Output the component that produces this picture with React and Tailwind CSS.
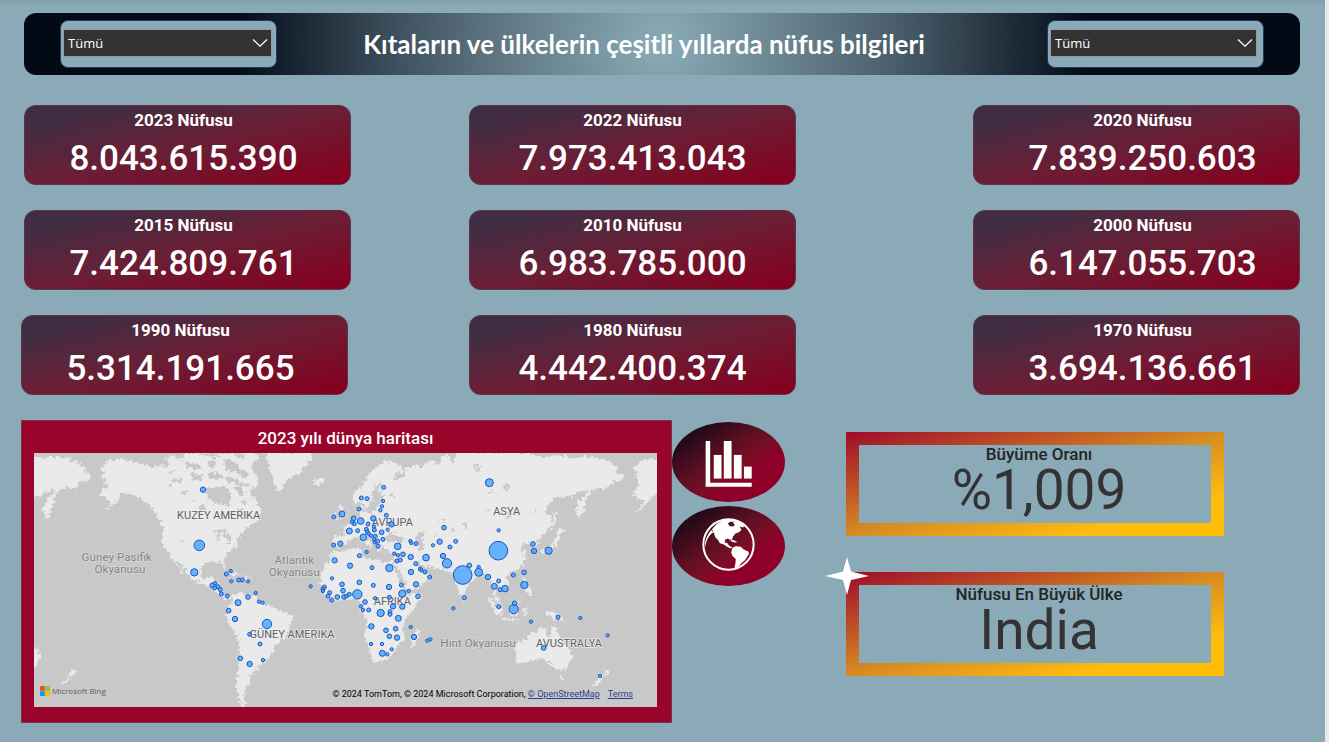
import React from "react";

const topRows = [
  [
    { year: "2023", value: "8.043.615.390" },
    { year: "2022", value: "7.973.413.043" },
    { year: "2020", value: "7.839.250.603" },
  ],
  [
    { year: "2015", value: "7.424.809.761" },
    { year: "2010", value: "6.983.785.000" },
    { year: "2000", value: "6.147.055.703" },
  ],
];

const lastRow = [
  { year: "1990", value: "5.314.191.665" },
  { year: "1980", value: "4.442.400.374" },
  { year: "1970", value: "3.694.136.661" },
];

const columnStyles = ["col-start-1 pr-2", "col-start-3", "col-start-5 pl-3"];

// Each entry is [x, y, radius] in map units.
const bubbles = [
  [549, 224, 8], [538, 391, 16], [523, 472, 11], [619, 477, 6], [632, 468, 5], [634, 499, 5],
  [577, 511, 7], [585, 505, 5], [584, 519, 6], [594, 515, 6], [601, 524, 6], [604, 537, 6],
  [622, 543, 6], [656, 495, 6], [667, 495, 6], [684, 499, 5], [654, 563, 9], [626, 587, 7],
  [645, 612, 8], [684, 546, 7], [707, 534, 5], [717, 560, 5], [728, 563, 5], [741, 627, 14],
  [689, 658, 6], [720, 687, 6], [661, 730, 7], [689, 747, 8], [729, 735, 5],
  [1091, 217, 6], [1024, 249, 6], [1041, 251, 6], [1089, 258, 5], [1086, 274, 5], [1081, 286, 5],
  [1017, 282, 6], [1099, 301, 6], [941, 305, 6], [966, 297, 9], [1001, 310, 7], [997, 321, 6],
  [1003, 326, 6], [1022, 318, 10], [1060, 310, 8], [1044, 327, 6], [1062, 335, 5], [1063, 345, 6],
  [1114, 328, 8], [988, 348, 9], [1013, 347, 6], [1039, 343, 6], [1042, 351, 6], [1046, 356, 5],
  [1085, 352, 7], [1103, 344, 5], [1030, 367, 10], [1053, 362, 5], [1066, 364, 6], [1062, 373, 5],
  [1065, 382, 5], [1073, 379, 6], [1089, 373, 6], [1074, 394, 6], [941, 390, 6], [961, 386, 8],
  [1133, 394, 10], [1171, 378, 5], [1174, 384, 5], [1188, 386, 6], [1239, 391, 5], [1259, 380, 8],
  [1018, 422, 6], [1040, 411, 5], [944, 436, 8], [990, 452, 8], [1056, 458, 6], [1108, 459, 11],
  [1123, 416, 5], [1134, 421, 5], [1149, 418, 7], [1131, 438, 6], [1141, 435, 6], [1172, 426, 8],
  [1187, 446, 6], [1218, 428, 10], [1201, 462, 6], [1204, 466, 5], [1215, 471, 6], [1229, 486, 6],
  [1173, 471, 8], [1188, 508, 8], [1166, 528, 5], [1194, 544, 7], [936, 490, 5], [872, 514, 5],
  [966, 508, 7], [913, 516, 6], [909, 522, 6], [909, 528, 5], [929, 533, 6], [924, 543, 6],
  [935, 555, 6], [952, 546, 7], [969, 527, 7], [972, 546, 7], [980, 543, 6], [988, 538, 6],
  [1012, 538, 14], [1018, 502, 7], [1060, 511, 6], [1107, 516, 8], [1144, 510, 6], [1147, 536, 11],
  [1035, 561, 7], [1065, 550, 5], [1108, 547, 6], [1023, 574, 5], [1029, 585, 5], [1046, 585, 6],
  [1082, 594, 11], [1110, 590, 6], [1110, 598, 6], [1119, 574, 8], [1147, 575, 8], [1135, 610, 9],
  [1054, 634, 8], [1098, 646, 7], [1127, 641, 7], [1172, 636, 5], [1108, 664, 7], [1131, 668, 8],
  [1182, 666, 8], [1222, 677, 5], [1231, 673, 5], [1053, 687, 5], [1086, 687, 5], [1115, 703, 5],
  [1087, 715, 9], [1102, 718, 5],
  [1408, 203, 12], [1436, 346, 5], [1272, 338, 7], [1290, 396, 6], [1307, 379, 6], [1269, 423, 8],
  [1281, 445, 14], [1435, 407, 28], [1328, 480, 28], [1348, 451, 7], [1376, 456, 5], [1376, 472, 12],
  [1404, 486, 8], [1436, 498, 6], [1423, 514, 9], [1440, 524, 6], [1455, 521, 10], [1480, 480, 6],
  [1512, 472, 7], [1513, 510, 11], [1539, 387, 7], [1542, 408, 8], [1586, 407, 11], [1333, 548, 6],
  [1300, 580, 5], [1436, 575, 6], [1481, 582, 14], [1484, 565, 7], [1533, 620, 5], [1614, 607, 6],
  [1681, 609, 5], [1763, 661, 5], [1571, 699, 7], [1740, 783, 5],
];

const landPaths = [
  // North and Central America
  "M240 160L265 140L292 130L330 138L375 150L398 158L420 148L440 160L450 140L430 126L460 124L480 134L500 114L716 114L712 140L690 150L700 170L715 185L712 215L690 225L700 250L716 272L722 290L712 320L690 330L672 345L655 372L650 390L640 402L622 418L612 432L614 450L618 464L610 460L604 440L585 440L562 440L548 448L543 466L546 488L560 494L574 484L582 486L578 502L590 506L598 514L600 532L612 540L628 538L636 546L630 552L616 550L602 546L592 530L578 520L560 510L540 504L516 494L504 480L494 462L478 442L464 434L476 452L490 472L484 470L466 448L456 428L440 408L426 390L424 360L430 340L420 322L408 296L390 270L370 254L345 240L320 236L302 240L290 258L268 280L240 296L262 278L276 262L256 248L240 240L246 226L262 214L252 204L260 194L240 184L256 176Z",
  // South America
  "M638 550L644 538L662 532L678 534L700 540L722 558L740 568L760 578L790 590L818 606L820 614L806 636L800 662L780 682L764 692L758 712L742 734L730 748L714 752L716 764L700 772L692 784L690 800L680 815L676 838L672 856L686 870L676 873L660 862L654 840L650 806L654 770L656 730L658 690L652 664L636 644L624 618L618 598L630 576Z",
  // Greenland and Iceland
  "M738 114L742 140L752 166L762 190L764 214L774 232L786 226L792 204L816 186L842 170L856 150L872 132L882 114Z",
  "M880 198L890 190L906 187L916 194L908 206L894 210L884 206Z",
  // British Isles
  "M956 268L968 270L966 282L976 294L980 306L964 312L954 312L962 300L956 288Z",
  "M936 296L946 290L950 300L944 310L934 308Z",
  // Eurasia
  "M940 364L966 364L976 350L966 338L980 330L996 320L1010 306L1018 298L1014 278L1024 272L1028 292L1044 294L1066 286L1078 274L1080 256L1096 250L1094 240L1080 238L1076 222L1086 206L1082 198L1068 212L1056 236L1054 262L1040 284L1030 266L1024 258L1008 268L998 258L1000 238L1022 216L1040 188L1064 160L1090 144L1120 140L1146 156L1154 172L1130 178L1122 184L1136 196L1150 184L1160 160L1180 150L1200 158L1230 140L1260 146L1262 126L1284 120L1300 144L1298 160L1308 114L1530 114L1560 126L1600 122L1640 124L1666 128L1700 124L1730 126L1764 140L1788 152L1794 174L1814 186L1798 198L1774 202L1764 224L1738 216L1704 236L1698 262L1690 292L1678 314L1668 290L1672 264L1688 246L1706 226L1680 228L1660 242L1630 246L1600 250L1574 288L1594 304L1596 334L1574 358L1550 376L1552 398L1542 404L1534 386L1518 384L1504 392L1512 410L1514 432L1506 454L1488 468L1470 478L1456 482L1468 504L1468 522L1452 534L1442 522L1434 516L1430 540L1438 556L1446 572L1438 572L1426 550L1420 522L1412 500L1400 484L1386 474L1370 486L1350 506L1336 524L1330 544L1320 538L1310 508L1302 480L1286 474L1276 464L1244 460L1214 452L1194 440L1188 446L1204 466L1216 472L1232 484L1216 504L1190 520L1166 532L1158 510L1146 484L1130 456L1122 438L1130 412L1106 412L1092 404L1088 390L1080 392L1086 408L1078 412L1068 392L1056 372L1040 362L1036 366L1050 382L1058 392L1050 404L1048 394L1034 380L1022 368L1008 368L992 372L980 388L962 398L940 396Z",
  // Africa
  "M942 408L966 408L1000 402L1024 402L1028 424L1056 438L1070 432L1092 440L1118 442L1120 454L1134 484L1144 514L1160 538L1200 538L1204 546L1176 588L1152 622L1150 650L1148 676L1130 696L1118 722L1098 738L1072 742L1058 736L1048 700L1032 660L1042 630L1034 604L1022 586L1024 566L1008 552L980 552L944 560L924 546L906 522L902 504L906 470L926 438L934 416Z",
  // Madagascar and Sri Lanka
  "M1192 640L1198 656L1188 690L1176 696L1170 680L1174 662Z",
  "M1330 540L1338 546L1336 556L1328 554Z",
  // Japan
  "M1618 336L1634 344L1622 354L1616 372L1612 392L1598 402L1576 406L1572 416L1562 410L1580 398L1600 388L1608 366L1612 350Z",
  "M1596 330L1602 332L1612 290L1606 292Z",
  // Philippines and Taiwan
  "M1508 486L1518 490L1518 508L1532 520L1536 540L1524 542L1512 512Z",
  "M1508 462L1514 464L1510 476L1504 470Z",
  // Indonesia
  "M1400 546L1412 552L1434 576L1448 594L1444 606L1430 596L1412 570Z",
  "M1446 606L1474 610L1500 616L1496 620L1450 614Z",
  "M1466 576L1482 562L1492 556L1500 566L1492 586L1488 602L1470 598Z",
  "M1508 582L1530 576L1518 586L1524 602L1512 596L1508 604Z",
  "M1568 590L1584 588L1600 594L1624 604L1640 622L1618 616L1602 618L1588 602Z",
  // Australia and Tasmania
  "M1484 690L1500 680L1520 668L1532 654L1548 650L1560 638L1580 640L1578 656L1592 668L1600 634L1608 640L1616 664L1634 684L1652 706L1656 726L1642 756L1628 768L1604 762L1592 744L1580 744L1568 730L1540 734L1510 744L1490 746L1488 722Z",
  "M1618 780L1632 780L1624 792Z",
  // New Zealand
  "M1754 762L1768 768L1758 782L1744 790L1750 778Z",
  "M1744 786L1748 794L1734 806L1720 812L1724 802Z",
  // Caribbean and Svalbard
  "M612 474L640 470L662 484L646 484Z",
  "M668 486L690 488L684 496L666 494Z",
];

const waterPaths = [
  // Hudson Bay
  "M556 226L574 216L590 220L606 214L630 226L634 250L626 266L618 282L608 270L580 262L562 248Z",
  // Baffin, Foxe and other Arctic waters
  "M610 130L640 136L660 160L690 180L676 190L646 172L620 168Z",
  "M630 180L650 196L668 204L690 206L684 216L660 212L636 200L622 206L616 190Z",
  "M640 216L664 214L676 236L664 240L646 232Z",
  "M440 170L470 166L460 176Z",
  "M450 196L486 190L478 204Z",
  "M490 140L530 146L548 160L526 164L500 156Z",
  "M560 140L580 130L590 150L574 164Z",
  "M512 176L550 180L544 196L520 192Z",
  "M560 172L600 176L612 190L590 196L566 188Z",
  "M540 116L600 118L596 126L552 124Z",
  "M640 114L668 116L684 134L660 128Z",
  "M436 206L456 210L450 220Z",
  "M480 232L502 228L494 240Z",
  "M508 256L528 252L520 264Z",
  "M540 270L552 264L556 286L546 290Z",
  "M660 262L684 258L676 270Z",
  "M650 288L668 284L662 300Z",
  // Great Lakes
  "M580 350L604 338L622 350L606 356Z",
  "M606 360L628 358L640 374L624 378Z",
  "M590 360L598 358L598 380L588 376Z",
  "M612 388L634 380L628 388Z",
  "M484 376L492 372L488 382Z",
  // Black Sea and Caspian Sea
  "M1096 366L1108 352L1124 358L1144 364L1158 378L1136 382L1112 378L1100 378Z",
  "M1186 356L1206 346L1216 356L1204 366L1212 388L1208 404L1194 400L1188 380Z",
  // Northern European lakes
  "M1112 238L1124 234L1122 248L1112 248Z",
  // Aral, Balkhash, Baikal
  "M1240 360L1250 356L1248 368Z",
  "M1290 346L1314 342L1308 350Z",
  "M1452 316L1468 294L1478 290L1466 312Z",
  // Siberian lakes
  "M1360 148L1376 146L1368 156Z",
  "M1360 160L1384 158L1378 172Z",
  "M1452 210L1472 208L1468 228L1456 224Z",
  "M1530 294L1552 288L1546 296Z",
  "M1404 232L1426 228L1420 236Z",
  "M1398 286L1412 280L1410 290Z",
  "M1316 326L1346 324L1334 334Z",
  "M1256 316L1280 312L1272 322Z",
];

const mapLabels = [
  { text: "KUZEY AMERIKA", x: 596, y: 312, kind: "land" },
  { text: "GÜNEY AMERIKA", x: 816, y: 668, kind: "land" },
  { text: "AVRUPA", x: 1117, y: 332, kind: "land" },
  { text: "AFRIKA", x: 1117, y: 569, kind: "land" },
  { text: "ASYA", x: 1460, y: 299, kind: "land" },
  { text: "AVUSTRALYA", x: 1647, y: 695, kind: "land" },
  { text: "Güney Pasifik", x: 290, y: 437, kind: "sea" },
  { text: "Okyanusu", x: 300, y: 474, kind: "sea" },
  { text: "Atlantik", x: 823, y: 447, kind: "sea" },
  { text: "Okyanusu", x: 823, y: 484, kind: "sea" },
  { text: "Hint Okyanusu", x: 1374, y: 696, kind: "sea" },
];

function Slicer({ label, inset }) {
  return (
    <div className={`w-[217px] shrink-0 rounded-lg border border-[#1f3a66] bg-[#89aab6] pt-2 pb-2.5 ${inset}`}>
      <div className="relative">
        <select
          aria-label={label}
          className="block h-7 w-full appearance-none border border-[#9a9a9a] bg-[#333333] pt-0.5 pl-1 font-['Open_Sans',sans-serif] text-[13px] text-white"
        >
          <option>Tümü</option>
        </select>
        <svg
          viewBox="0 0 16 10"
          className="pointer-events-none absolute top-[9px] right-1 h-2.5 w-4"
          fill="none"
          stroke="white"
          strokeWidth="1.3"
          aria-hidden="true"
        >
          <path d="M1 1.5L8 8.2L15 1.5" />
        </svg>
      </div>
    </div>
  );
}

function StatCard({ year, value, place }) {
  return (
    <section
      className={`flex h-20 flex-col items-center rounded-xl border border-[#5b5468]/40 bg-[linear-gradient(to_bottom_right,#412d43_14%,#6a1f36_50%,#85001f_96%)] pt-1 text-white ${place}`}
    >
      <h2 className="text-[17px] leading-5 font-bold">{year} Nüfusu</h2>
      <p className="pt-1.5 text-[35px] leading-[46px] font-medium">{value}</p>
    </section>
  );
}

function StatRow({ items, columns }) {
  return (
    <div className={`grid ${columns}`}>
      {items.map((item, index) => (
        <StatCard key={item.year} year={item.year} value={item.value} place={columnStyles[index]} />
      ))}
    </div>
  );
}

function WorldMap() {
  return (
    <svg viewBox="42 114 1869 762" className="block h-auto w-full bg-[#c8c8c8]" role="img" aria-label="2023 yılı dünya haritası">
      <defs>
        <filter id="coast" x="0" y="0" width="100%" height="100%">
          <feTurbulence type="fractalNoise" baseFrequency="0.09" numOctaves="4" seed="4" result="noise" />
          <feDisplacementMap in="SourceGraphic" in2="noise" scale="26" xChannelSelector="R" yChannelSelector="G" />
        </filter>
        <g id="world">
          <g fill="#eaeaea">
            {landPaths.map((d) => (
              <path key={d} d={d} />
            ))}
          </g>
          <g fill="#c8c8c8">
            {waterPaths.map((d) => (
              <path key={d} d={d} />
            ))}
          </g>
        </g>
      </defs>
      <g filter="url(#coast)">
        <rect x="20" y="90" width="1913" height="810" fill="#c8c8c8" />
        <use href="#world" />
        <use href="#world" x="-1598" />
        <use href="#world" x="1598" />
      </g>
      <g fontFamily="Roboto, sans-serif" textAnchor="middle" strokeLinejoin="round" paintOrder="stroke">
        {mapLabels.map((label) => (
          <text
            key={`${label.text}-${label.x}-${label.y}`}
            x={label.x}
            y={label.y}
            fontSize={label.kind === "land" ? 33 : 35}
            fill={label.kind === "land" ? "#5f5d69" : "#858585"}
            stroke={label.kind === "land" ? "#eeeeee" : "#d6d6d6"}
            strokeWidth="5"
          >
            {label.text}
          </text>
        ))}
      </g>
      <g fill="#4aa3ff" fillOpacity="0.82" stroke="#1559c4" strokeWidth="3">
        {bubbles.map(([x, y, r]) => (
          <circle key={`${x}-${y}`} cx={x} cy={y} r={r} />
        ))}
      </g>
    </svg>
  );
}

function MapPanel() {
  return (
    <section className="border border-[#7a3550] bg-[#99052a] pr-3.5 pb-[15px] pl-3">
      <h2 className="pt-1.5 pb-1 text-center text-[17px] leading-[22px] font-medium text-white">
        2023 yılı dünya haritası
      </h2>
      <div className="relative">
        <WorldMap />
        <div className="absolute bottom-2.5 left-1.5 flex items-center gap-0.5 font-['Open_Sans',sans-serif] text-[8px] leading-3 text-[#606060]">
          <svg viewBox="0 0 10 10" className="size-2.5" aria-hidden="true">
            <path fill="#f25022" d="M0 0h4.8v4.8H0z" />
            <path fill="#8cc63f" d="M5.2 0H10v4.8H5.2z" />
            <path fill="#00a4ef" d="M0 5.2h4.8V10H0z" />
            <path fill="#ffb900" d="M5.2 5.2H10V10H5.2z" />
          </svg>
          <span>Microsoft Bing</span>
        </div>
        <p className="absolute right-6 bottom-[7px] flex font-[Roboto,sans-serif] text-[9px] leading-3 text-black">
          <span>© 2024 TomTom, © 2024 Microsoft Corporation,&nbsp;</span>
          <a href="#openstreetmap" className="mr-2 text-[#2b3f92] underline">© OpenStreetMap</a>
          <a href="#terms" className="text-[#2b3f92] underline">Terms</a>
        </p>
      </div>
    </section>
  );
}

function OvalButton({ label, align, children }) {
  return (
    <button
      type="button"
      aria-label={label}
      className={`flex h-20 w-full items-center justify-center rounded-[50%] bg-[linear-gradient(to_bottom_right,#250a18_18%,#5e0f22_42%,#7c0e25_58%,#8c0029_66%,#90002a_100%)] ${align}`}
    >
      {children}
    </button>
  );
}

function ChartIcon() {
  return (
    <svg viewBox="120 76 148 148" className="size-12" fill="white" aria-hidden="true">
      <path d="M122 79H136V208H264V220H122Z" />
      <path d="M147 122H171V195H147Z" />
      <path d="M178 79H202V195H178Z" />
      <path d="M209 122H233V195H209Z" />
      <path d="M240 158H264V195H240Z" />
    </svg>
  );
}

function GlobeIcon() {
  return (
    <svg viewBox="112 306 160 160" className="size-[53px]" fill="white" aria-hidden="true">
      <circle cx="192" cy="386" r="76" fill="none" stroke="white" strokeWidth="6" />
      <path d="M142 340L156 324L176 312L198 309L216 313L230 321L240 330L236 335L226 332L231 343L222 350L214 352L206 361L203 371L196 372L190 368L181 372L181 380L189 382L194 390L203 394L199 398L186 392L178 386L166 382L160 372L152 364L148 352ZM190 322L196 331L207 332L211 325L204 320L212 317L198 317Z" fillRule="evenodd" />
      <path d="M197 372L208 373L219 379L211 380L200 376Z" />
      <path d="M204 396L214 391L229 393L238 401L252 407L254 414L247 425L241 434L232 441L224 451L216 459L210 458L213 442L214 430L204 421L200 410Z" />
      <path d="M140 342C126 358 119 378 121 396C125 374 132 358 146 350Z" />
    </svg>
  );
}

function FramedStat({ label, value, children }) {
  return (
    <section className="relative h-[104px] border-[13px] pl-2 text-center [border-image:linear-gradient(to_bottom_right,#9f0a2b,#d68c22_50%,#fdbc10_80%,#ffc000)_13]">
      {children}
      <h2 className="text-[17px] leading-[18px] font-medium text-[#242424]">{label}</h2>
      <p className="text-[55px] leading-[54px] text-[#333333]">{value}</p>
    </section>
  );
}

export default function App() {
  return (
    <div className="min-h-screen border-r-4 border-[#eaeaea] bg-[#89aab6] bg-[linear-gradient(to_bottom,#7f9ea9,#89aab6_5px)] font-[Roboto,sans-serif]">
      <header className="pt-[13px] pr-[25px] pl-6">
        <div className="flex h-[62px] items-center rounded-xl bg-[radial-gradient(circle_farthest-side_at_center,#8aabb7,#728f99_14%,#5b717e_28%,#3e505d_42%,#263440_52%,#111c29_61%,#020a16_67%)] px-9">
          <Slicer label="Kıta" inset="pr-1 pl-0.5" />
          <h1 className="flex-1 pr-9 text-center font-[Lato,sans-serif] text-[26px] leading-8 font-bold whitespace-nowrap text-white">
            Kıtaların ve ülkelerin çeşitli yıllarda nüfus bilgileri
          </h1>
          <Slicer label="Ülke" inset="pr-1.5 pl-0.5" />
        </div>
      </header>

      <main className="pt-[30px] pb-4">
        <div className="flex flex-col gap-[25px] pr-[25px] pl-6">
          {topRows.map((row) => (
            <StatRow key={row[0].year} items={row} columns="grid-cols-[327fr_118fr_327fr_177fr_327fr]" />
          ))}
        </div>

        <div className="pt-[25px] pr-[25px] pl-[21px]">
          <StatRow items={lastRow} columns="grid-cols-[327fr_121fr_327fr_177fr_327fr]" />
          <div className="grid grid-cols-[651fr_113fr_61fr_378fr_76fr] items-start pt-[25px]">
            <MapPanel />
            <nav className="flex flex-col gap-1 pt-0.5" aria-label="Sayfalar">
              <OvalButton label="Grafikler" align="pt-1">
                <ChartIcon />
              </OvalButton>
              <OvalButton label="Dünya" align="pb-1">
                <GlobeIcon />
              </OvalButton>
            </nav>
            <div className="col-start-4 flex flex-col gap-9 pt-3">
              <FramedStat label="Büyüme Oranı" value="%1,009" />
              <FramedStat label="Nüfusu En Büyük Ülke" value="India">
                <svg viewBox="0 0 44 38" className="absolute -top-7 -left-[34px] h-[38px] w-11" fill="white" aria-hidden="true">
                  <path d="M22 0L26 14.5L44 19L26 23L22 38L18 23L0 19L18 14.5Z" />
                </svg>
              </FramedStat>
            </div>
          </div>
        </div>
      </main>
    </div>
  );
}
